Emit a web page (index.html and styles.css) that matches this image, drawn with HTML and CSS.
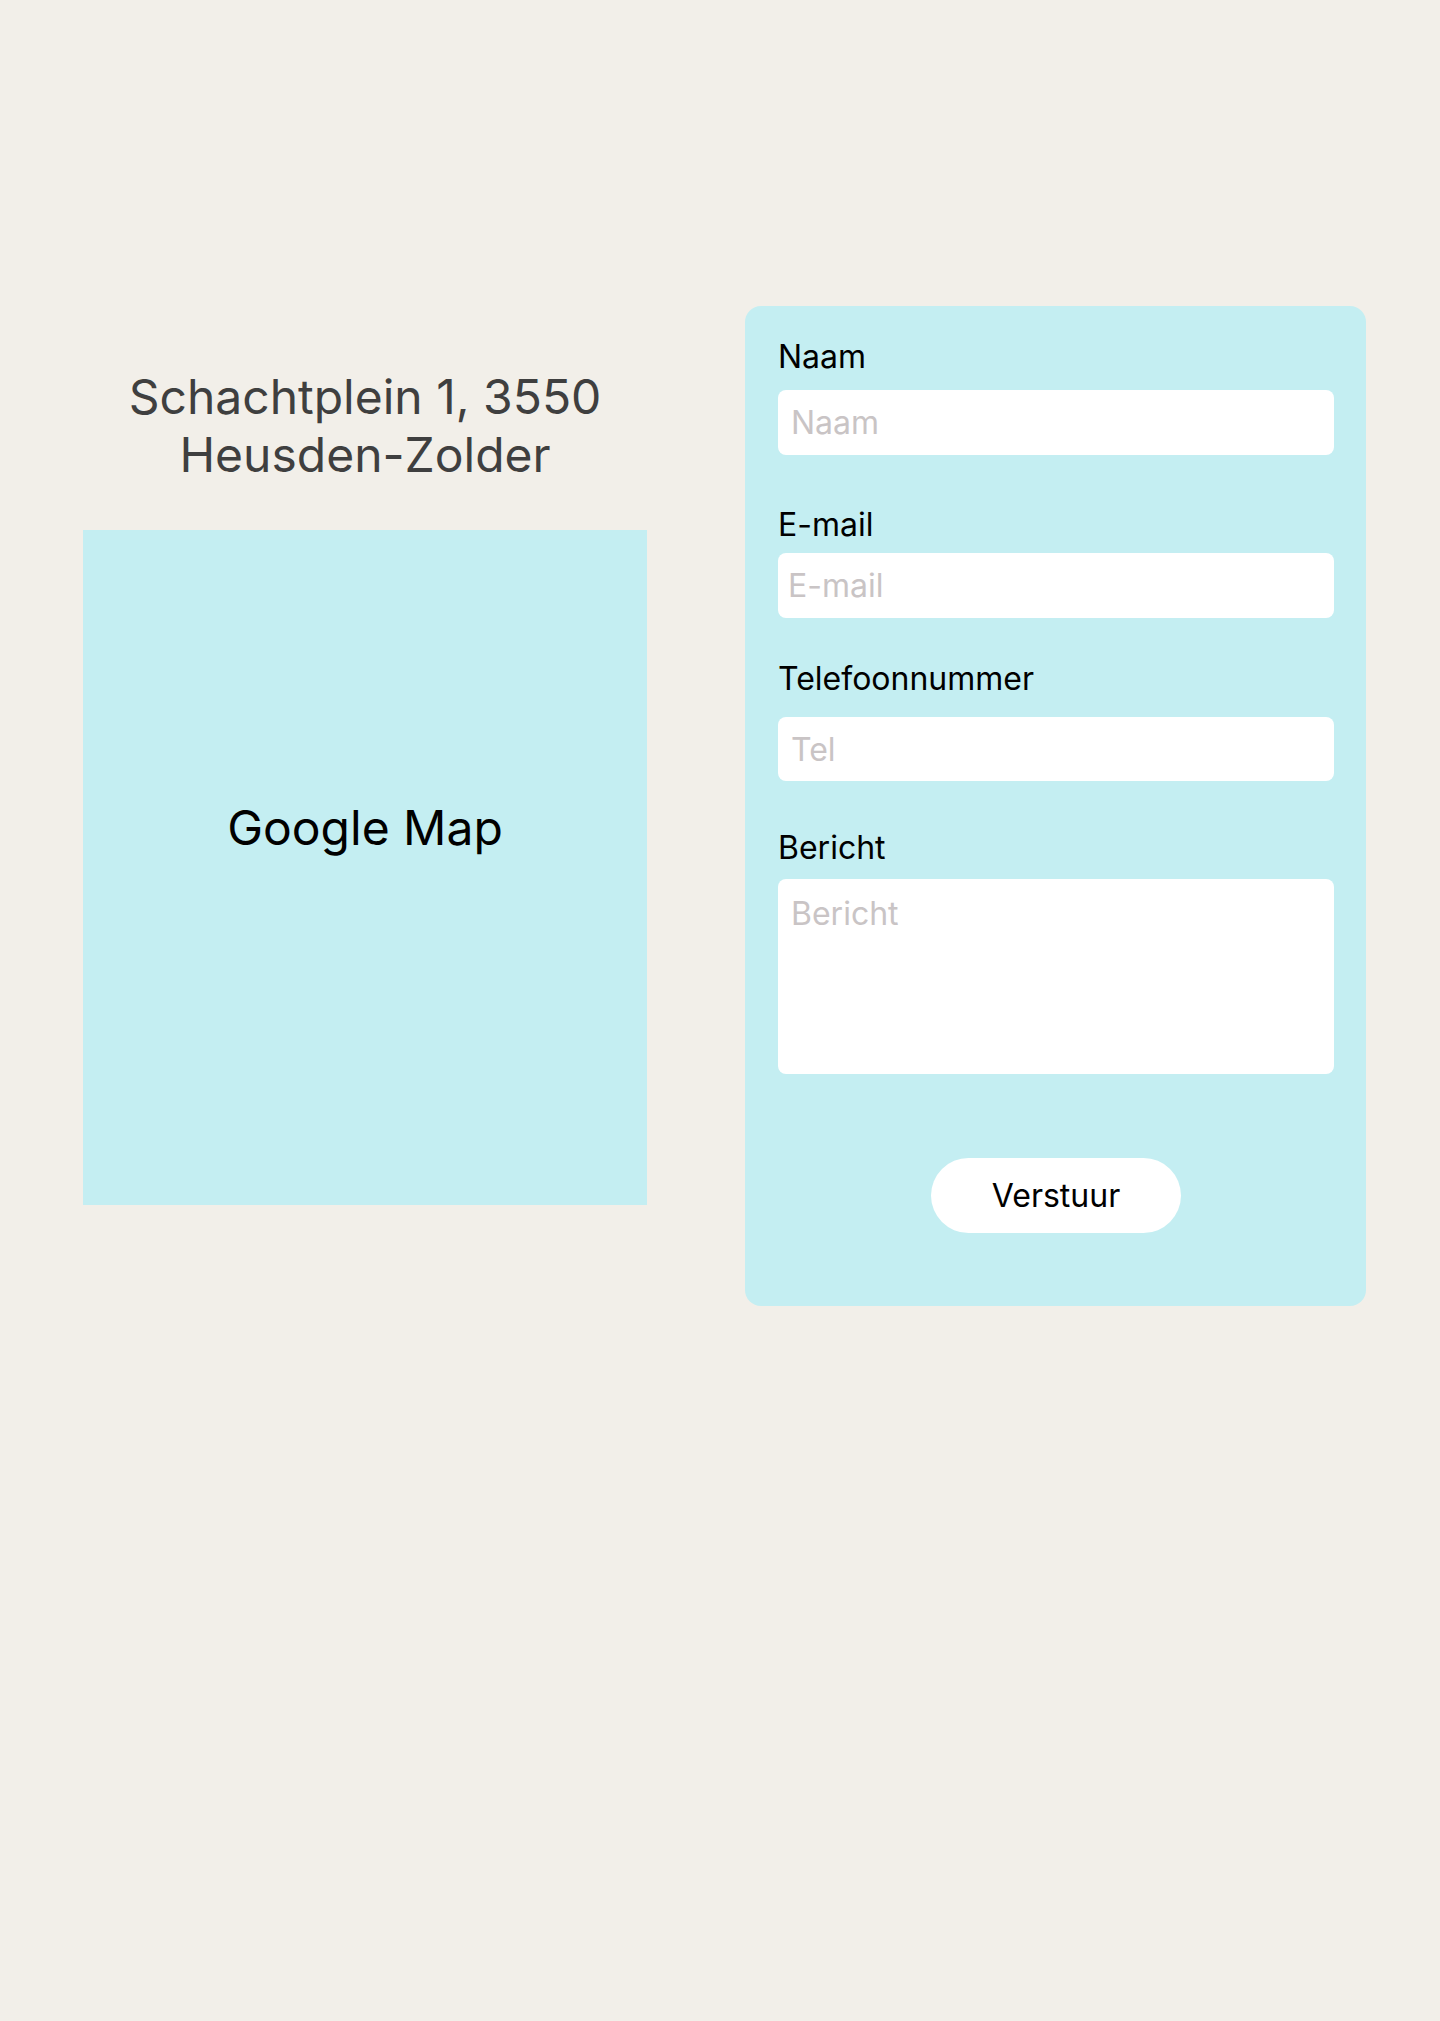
FILE: index.html
```html
<!DOCTYPE html>
<html lang="nl">
<head>
<meta charset="utf-8">
<title>Contact</title>
<link rel="stylesheet" href="styles.css">
</head>
<body>
<main class="contact">
  <section class="location">
    <h2 class="address">Schachtplein 1, 3550 Heusden-Zolder</h2>
    <div class="map"><span class="map-label">Google Map</span></div>
  </section>
  <form class="form-card">
    <div class="field field-name">
      <label class="field-label" for="naam">Naam</label>
      <input class="field-input" id="naam" type="text" placeholder="Naam">
    </div>
    <div class="field field-email">
      <label class="field-label" for="email">E-mail</label>
      <input class="field-input" id="email" type="email" placeholder="E-mail">
    </div>
    <div class="field field-tel">
      <label class="field-label" for="tel">Telefoonnummer</label>
      <input class="field-input" id="tel" type="tel" placeholder="Tel">
    </div>
    <div class="field field-msg">
      <label class="field-label" for="bericht">Bericht</label>
      <textarea class="field-input field-textarea" id="bericht" placeholder="Bericht"></textarea>
    </div>
    <button class="submit" type="button">Verstuur</button>
  </form>
</main>
</body>
</html>
```
FILE: styles.css
```css
* { box-sizing: border-box; }

html, body {
  margin: 0;
  padding: 0;
}

body {
  background: #f2efe9;
  min-height: 2021px;
  font-family: "Inter", "Noto Sans", sans-serif;
  color: #000;
}

.contact {
  display: flex;
  align-items: flex-start;
  gap: 98px;
  padding: 306px 0 0 83px;
}

.location {
  width: 564px;
  padding-top: 62px;
  display: flex;
  flex-direction: column;
}

.address {
  margin: 0 auto 46px;
  max-width: 500px;
  font-size: 48px;
  line-height: 58px;
  font-weight: 400;
  color: #3f3f3f;
  text-align: center;
}

.map {
  height: 675px;
  background: #c4eef2;
  display: flex;
  justify-content: center;
  align-items: flex-start;
  padding-top: 269px;
}

.map-label {
  font-size: 48px;
  line-height: 58px;
  color: #000;
}

.form-card {
  width: 621px;
  background: #c4eef2;
  border-radius: 16px;
  padding: 31px 32px 73px 33px;
  display: flex;
  flex-direction: column;
}

.field {
  display: flex;
  flex-direction: column;
}

.field-label {
  font-size: 32px;
  line-height: 40px;
  color: #000;
}

.field-input {
  display: block;
  width: 100%;
  height: 65px;
  border: none;
  outline: none;
  border-radius: 8px;
  background: #fff;
  font-family: inherit;
  font-size: 32px;
  line-height: 38px;
  color: #000;
  padding: 0 13px;
}

.field-input::placeholder {
  color: #c9c4c5;
  opacity: 1;
}

.field-name .field-input { margin-top: 13px; }

.field-email { margin-top: 50px; }
.field-email .field-input { margin-top: 8px; padding-left: 10px; }

.field-tel { margin-top: 41px; }
.field-tel .field-input { margin-top: 18px; height: 64px; }

.field-msg { margin-top: 47px; }
.field-textarea {
  margin-top: 11px;
  height: 195px;
  padding: 16px 13px;
  resize: none;
}

.submit {
  align-self: center;
  margin-top: 84px;
  width: 250px;
  height: 75px;
  border: none;
  border-radius: 38px;
  background: #fff;
  font-family: inherit;
  font-size: 32px;
  color: #000;
  cursor: pointer;
}
```
